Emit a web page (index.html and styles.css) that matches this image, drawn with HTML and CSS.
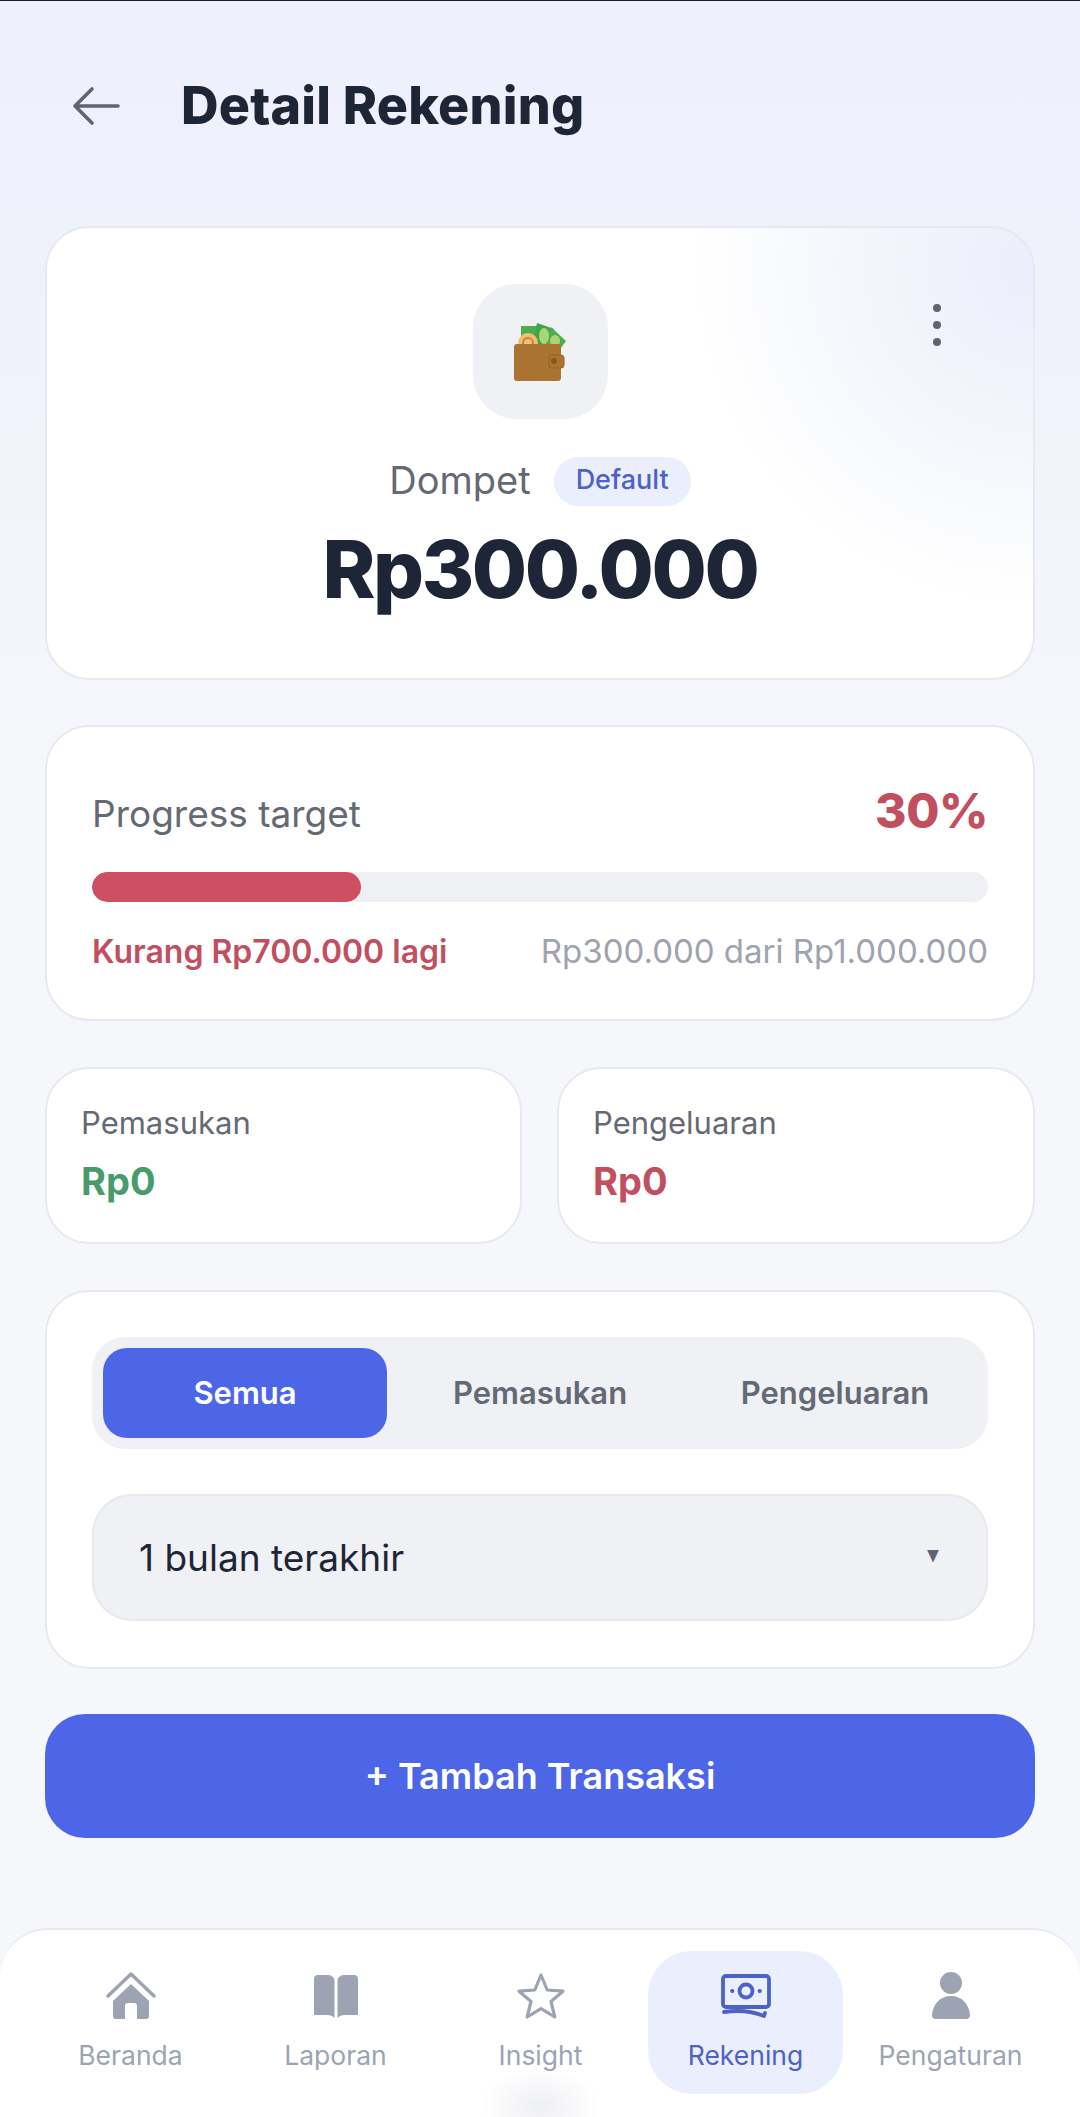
FILE: index.html
```html
<!DOCTYPE html>
<html lang="id">
<head>
<meta charset="utf-8">
<title>Detail Rekening</title>
<link rel="stylesheet" href="styles.css">
</head>
<body>
<div class="app">
  <header class="topbar">
    <svg class="back" viewBox="0 0 50 40" fill="none" stroke="#5f6470" stroke-width="3.6" stroke-linecap="round" stroke-linejoin="round"><path d="M47 20H4M21 3 4 20l17 17"/></svg>
    <h1 class="title">Detail Rekening</h1>
  </header>
  <main class="content">
    <section class="card hero">
      <div class="wallet-box">
        <svg class="wallet" viewBox="0 0 52 58">
          <path fill="#4cae4f" d="M7 3h20v20H7z"/>
          <path fill="#3fa648" d="m23 0 17 6-5 18-16-4z"/>
          <path fill="#4cae4f" d="m37 4 15 14-8 11-14-8z"/>
          <ellipse fill="#a9d574" cx="30" cy="13" rx="5" ry="8"/>
          <ellipse fill="#a9d574" cx="41" cy="18" rx="5" ry="6"/>
          <circle fill="#f2c073" cx="14" cy="20" r="10"/>
          <circle fill="none" stroke="#c98238" stroke-width="2" cx="14" cy="20" r="5"/>
          <rect fill="#a97430" x="0" y="21" width="47" height="37" rx="3"/>
          <rect fill="#a97430" stroke="#95631f" stroke-width="1" x="35" y="32" width="15" height="13" rx="3"/>
          <circle fill="#87581b" cx="40" cy="38" r="3"/>
        </svg>
      </div>
      <button class="more" aria-label="Menu"><span></span><span></span><span></span></button>
      <div class="name-row">
        <span class="name">Dompet</span>
        <span class="badge">Default</span>
      </div>
      <div class="amount">Rp300.000</div>
    </section>

    <section class="card progress">
      <div class="progress-head">
        <span class="progress-label">Progress target</span>
        <span class="progress-pct">30%</span>
      </div>
      <div class="bar"><div class="bar-fill" style="width:30%"></div></div>
      <div class="progress-foot">
        <span class="short">Kurang Rp700.000 lagi</span>
        <span class="of">Rp300.000 dari Rp1.000.000</span>
      </div>
    </section>

    <div class="stats">
      <section class="card stat">
        <div class="stat-label">Pemasukan</div>
        <div class="stat-value income">Rp0</div>
      </section>
      <section class="card stat">
        <div class="stat-label">Pengeluaran</div>
        <div class="stat-value expense">Rp0</div>
      </section>
    </div>

    <section class="card filter">
      <div class="tabs">
        <div class="tab active">Semua</div>
        <div class="tab">Pemasukan</div>
        <div class="tab">Pengeluaran</div>
      </div>
      <div class="select">
        <span>1 bulan terakhir</span>
        <span class="caret">▼</span>
      </div>
    </section>

    <button class="add">+ Tambah Transaksi</button>
  </main>

  <nav class="nav">
    <div class="nav-item">
      <svg class="nav-icon" viewBox="0 0 50 50"><path fill="none" stroke="#9ca3b3" stroke-width="3.4" stroke-linecap="round" stroke-linejoin="round" d="M2 25 25 3l23 22"/><path fill="#9ca3b3" d="M25 13 43 30v15a3 3 0 0 1-3 3H31V35a3 3 0 0 0-3-3h-6a3 3 0 0 0-3 3v13H10a3 3 0 0 1-3-3V30z"/></svg>
      <span>Beranda</span>
    </div>
    <div class="nav-item">
      <svg class="nav-icon" viewBox="0 0 50 50"><path fill="#9ca3b3" d="M23.5 9v38c-2-2-4-3-7-3H3V8a4 4 0 0 1 4-4h9c4 0 7 2 7.500 5zM26.500 9v38c2-2 4-3 7-3H47V8a4 4 0 0 0-4-4h-9c-4 0-7 2-7.500 5z"/></svg>
      <span>Laporan</span>
    </div>
    <div class="nav-item">
      <svg class="nav-icon" viewBox="0 0 50 50"><path fill="none" stroke="#9ca3b3" stroke-width="3.200" stroke-linejoin="round" d="m25 4 6.200 15 15.800 1.200-12 10.300 3.800 15.500-13.800-8.400L11.200 46 15 30.500 3 20.200 18.800 19z"/></svg>
      <span>Insight</span>
    </div>
    <div class="nav-item active">
      <svg class="nav-icon" viewBox="0 0 50 50"><g fill="none" stroke="#4d62c8" stroke-width="3.800" stroke-linecap="round" stroke-linejoin="round"><rect x="2" y="5" width="46" height="31" rx="3"/><circle cx="25" cy="20" r="6.500"/><path d="M11 20h.5M38.500 20h.5M3 41c14-2 28-1 40 4l1-3"/></g></svg>
      <span>Rekening</span>
    </div>
    <div class="nav-item">
      <svg class="nav-icon person" viewBox="0 0 50 50"><circle fill="#9ca3b3" cx="25" cy="12" r="11"/><path fill="#9ca3b3" d="M25 25c11 0 18 8 19 19 .2 2-1 4-4 4H10c-3 0-4.200-2-4-4 1-11 8-19 19-19z"/></svg>
      <span>Pengaturan</span>
    </div>
  </nav>
</div>
</body>
</html>
```
FILE: styles.css
```css
* { box-sizing: border-box; }
html, body { margin: 0; padding: 0; }
body {
  font-family: Inter, "Liberation Sans", sans-serif;
  color: #1e2537;
  background: #f5f7fb;
}
.app {
  height: 2117px;
  display: flex;
  flex-direction: column;
  overflow: hidden;
  border-top: 1px solid #1a1d26;
  background: linear-gradient(180deg, #eef1fc 0, #eff2fb 300px, #f5f7fb 760px);
}
.topbar {
  height: 225px;
  display: flex;
  align-items: flex-start;
  padding: 70px 0 0 71px;
}
.back { width: 50px; height: 40px; margin-top: 15px; flex: none; }
.title {
  margin: 0 0 0 60px;
  font-size: 52px;
  line-height: 70px;
  font-weight: 800;
  letter-spacing: 0.2px;
  color: #1e2537;
}
.content {
  padding: 0 45px;
  display: flex;
  flex-direction: column;
}
.card {
  background: #fff;
  border: 2px solid #e7e9ef;
  border-radius: 44px;
}
.hero {
  position: relative;
  height: 454px;
  padding-top: 56px;
  display: flex;
  flex-direction: column;
  align-items: center;
  background:
    radial-gradient(ellipse 340px 340px at 100% 8%, #ebeefb 0, #f3f5fc 45%, rgba(255,255,255,0) 100%),
    #fff;
}
.wallet-box {
  width: 135px;
  height: 135px;
  border-radius: 44px;
  background: #eff1f5;
  display: flex;
  align-items: center;
  justify-content: center;
}
.wallet { width: 52px; height: 58px; }
.more {
  position: absolute;
  top: 76px;
  right: 92px;
  padding: 0;
  border: 0;
  background: none;
  display: flex;
  flex-direction: column;
  gap: 9px;
}
.more span { width: 8px; height: 8px; border-radius: 50%; background: #5f6470; }
.name-row {
  margin-top: 37px;
  height: 50px;
  display: flex;
  align-items: center;
  gap: 23px;
}
.name { font-size: 38px; color: #646974; margin-top: -2px; }
.badge {
  height: 49px;
  padding: 0 22px 3px;
  display: flex;
  align-items: center;
  border-radius: 25px;
  background: #ebeffd;
  color: #4d62c8;
  font-size: 27px;
  font-weight: 500;
}
.amount {
  margin-top: 15px;
  font-size: 80px;
  line-height: 96px;
  font-weight: 800;
  letter-spacing: -2.4px;
}
.progress {
  margin-top: 45px;
  height: 296px;
  padding: 56px 45px 0;
}
.progress-head {
  display: flex;
  justify-content: space-between;
  align-items: center;
  height: 60px;
}
.progress-label { font-size: 37px; color: #646974; }
.progress-pct { font-size: 48px; font-weight: 800; color: #c24f60; margin-top: -5px; letter-spacing: -0.4px; }
.bar {
  margin-top: 29px;
  height: 30px;
  border-radius: 15px;
  background: #eff0f3;
  overflow: hidden;
}
.bar-fill { height: 100%; border-radius: 15px; background: #ce4f62; }
.progress-foot {
  margin-top: 29px;
  height: 40px;
  display: flex;
  justify-content: space-between;
  align-items: center;
}
.short { color: #c24f60; font-weight: 600; font-size: 32px; }
.of { color: #9ea3af; font-size: 33px; }
.stats {
  margin-top: 46px;
  display: grid;
  grid-template-columns: 477px 478px;
  gap: 35px;
}
.stat { height: 177px; padding: 34px 34px 0; }
.stat-label { font-size: 31px; line-height: 40px; color: #646974; }
.stat-value { margin-top: 13px; font-size: 38px; line-height: 50px; font-weight: 700; }
.income { color: #4a9b6c; }
.expense { color: #c24f60; }
.filter {
  margin-top: 46px;
  height: 379px;
  padding: 45px;
}
.tabs {
  height: 112px;
  padding: 11px;
  display: grid;
  grid-template-columns: repeat(3, 284px);
  gap: 11px;
  border-radius: 33px;
  background: #eff1f5;
}
.tab {
  display: flex;
  align-items: center;
  justify-content: center;
  padding-bottom: 2px;
  border-radius: 24px;
  font-size: 31px;
  font-weight: 600;
  color: #646974;
}
.tab.active { background: #4d66e8; color: #fff; }
.select {
  margin-top: 45px;
  height: 127px;
  padding: 0 45px;
  display: flex;
  align-items: center;
  justify-content: space-between;
  border: 2px solid #e7e9ef;
  border-radius: 40px;
  background: #eff1f5;
  font-size: 37px;
  color: #1e2537;
}
.caret { font-size: 16px; color: #5f6470; transform: scaleX(.8) translateY(-2px); }
.add {
  margin: 45px 0 0;
  height: 124px;
  border: 0;
  border-radius: 40px;
  background: #4d66e8;
  color: #fff;
  font-family: inherit;
  font-size: 36px;
  font-weight: 600;
}
.nav {
  position: relative;
  margin-top: auto;
  height: 189px;
  padding: 21px 27px 0 28px;
  display: grid;
  grid-template-columns: repeat(5, 205px);
  align-items: start;
  background: #fff;
  border-top: 2px solid #e7e9ef;
  border-radius: 48px 48px 0 0;
}
.nav::after {
  content: "";
  position: absolute;
  left: 480px;
  bottom: -30px;
  width: 120px;
  height: 80px;
  background: radial-gradient(ellipse at center, #eeeff3 0, rgba(255,255,255,0) 70%);
}
.nav-item {
  height: 143px;
  margin: 0 5px;
  padding-top: 20px;
  display: flex;
  flex-direction: column;
  align-items: center;
  border-radius: 44px;
  font-size: 26.5px;
  color: #9ca3b3;
}
.nav-item span { margin-top: 14px; line-height: 40px; }
.nav-item.active { background: #ebeefd; color: #4d62c8; }
.nav-icon { width: 50px; height: 50px; }
```
